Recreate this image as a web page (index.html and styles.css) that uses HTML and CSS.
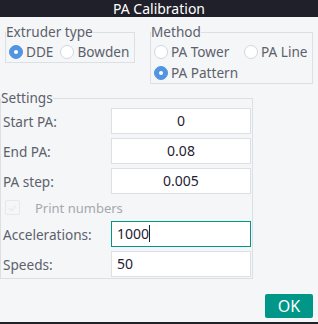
FILE: index.html
```html
<!DOCTYPE html>
<html>
<head>
<meta charset="utf-8">
<link rel="stylesheet" href="styles.css">
</head>
<body>
<div class="window">
  <div class="titlebar"><span class="title">PA Calibration</span></div>
  <div class="top">
    <fieldset class="group extruder">
      <legend>Extruder type</legend>
      <div class="radios">
        <span class="radio"><span class="dot on"></span>DDE</span>
        <span class="radio"><span class="dot"></span>Bowden</span>
      </div>
    </fieldset>
    <fieldset class="group method">
      <legend>Method</legend>
      <div class="method-grid">
        <span class="radio"><span class="dot"></span>PA Tower</span>
        <span class="radio"><span class="dot"></span>PA Line</span>
        <span class="radio"><span class="dot on"></span>PA Pattern</span>
      </div>
    </fieldset>
  </div>
  <fieldset class="group settings">
    <legend>Settings</legend>
    <div class="form">
      <span class="lbl">Start PA:</span><div class="field center">0</div>
      <span class="lbl">End PA:</span><div class="field center">0.08</div>
      <span class="lbl">PA step:</span><div class="field center">0.005</div>
      <div class="check-row">
        <span class="check"><svg width="14" height="14" viewBox="0 0 14 14"><path d="M3.5 7.2 L6 9.6 L10.6 4.6" fill="none" stroke="#e6e8eb" stroke-width="1.2"/></svg></span>
        <span class="check-text">Print numbers</span>
      </div>
      <span class="lbl">Accelerations:</span><div class="field left focus">1000<span class="caret"></span></div>
      <span class="lbl">Speeds:</span><div class="field left">50</div>
    </div>
  </fieldset>
  <div class="actions"><button class="ok">OK</button></div>
  <div class="bottombar"></div>
</div>
</body>
</html>
```
FILE: styles.css
```css
html, body {
  margin: 0;
  padding: 0;
}
body {
  font-family: "Noto Sans", "Open Sans", sans-serif;
  font-size: 13.6px;
  color: #5c616c;
  background: #f5f6f7;
}
.window {
  width: 318px;
  height: 324px;
  display: flex;
  flex-direction: column;
  background: #f5f6f7;
  overflow: hidden;
}
.titlebar {
  height: 17px;
  background: #1f2029;
  display: flex;
  align-items: center;
  justify-content: center;
}
.title {
  color: #ffffff;
  font-size: 14px;
  line-height: 17px;
}
.top {
  display: flex;
  align-items: flex-start;
  margin-top: 7px;
  height: 60px;
}
.group {
  margin: 0;
  padding: 0;
  border: 1px solid #dcdfe3;
  min-width: 0;
}
.group legend {
  padding: 0;
  line-height: 16px;
  font-size: 13.6px;
  color: #5c616c;
}
.extruder {
  margin-left: 5px;
  width: 130px;
  box-sizing: border-box;
}
.method {
  margin-left: 15px;
  width: 163px;
  box-sizing: border-box;
}
.radios {
  display: flex;
  gap: 7px;
  padding: 1px 0 0 3px;
}
.radio {
  display: flex;
  align-items: center;
  height: 21px;
  white-space: nowrap;
}
.dot {
  box-sizing: border-box;
  width: 14px;
  height: 14px;
  border-radius: 50%;
  border: 1px solid #cfd6e6;
  background: #ffffff;
  margin-right: 3px;
  flex: none;
  position: relative;
}
.dot.on {
  background: #5294e2;
  border-color: #5294e2;
}
.dot.on::after {
  content: "";
  position: absolute;
  left: 4px;
  top: 4px;
  width: 4px;
  height: 4px;
  border-radius: 50%;
  background: #ffffff;
}
.method-grid {
  display: grid;
  grid-template-columns: 90px auto;
  padding: 1px 0 0 3px;
}
.settings {
  margin-top: 6px;
  width: 253px;
  box-sizing: border-box;
}
.form {
  display: grid;
  grid-template-columns: 110px 140px;
  row-gap: 4px;
  padding: 2px 0 1px 0;
  align-items: center;
}
.lbl {
  padding-left: 2px;
  white-space: nowrap;
}
.field {
  box-sizing: border-box;
  height: 26px;
  border: 1px solid #dcdfe3;
  background: #ffffff;
  font-size: 14px;
  line-height: 24px;
  color: #1f2233;
}
.field.center {
  text-align: center;
}
.field.left {
  padding-left: 5px;
}
.field.focus {
  border-color: #009688;
}
.caret {
  display: inline-block;
  width: 1px;
  height: 17px;
  background: #1f2233;
  vertical-align: -3px;
}
.check-row {
  grid-column: 1 / 3;
  display: flex;
  align-items: center;
  height: 19px;
  padding-left: 4px;
}
.check {
  box-sizing: border-box;
  width: 15px;
  height: 15px;
  border: 1px solid #e6e8eb;
  border-radius: 2px;
  display: flex;
  align-items: center;
  justify-content: center;
}
.check-text {
  margin-left: 15px;
  font-size: 13px;
  color: #a4a8b0;
}
.actions {
  display: flex;
  justify-content: flex-end;
  padding-right: 5px;
  margin-top: 15px;
}
.ok {
  width: 48px;
  height: 24px;
  border: none;
  border-radius: 2px;
  background: #009688;
  color: #ffffff;
  font-family: "Noto Sans", "Open Sans", sans-serif;
  font-size: 16px;
  padding: 0;
}
.bottombar {
  margin-top: auto;
  height: 2px;
  background: #1f2029;
}
```
